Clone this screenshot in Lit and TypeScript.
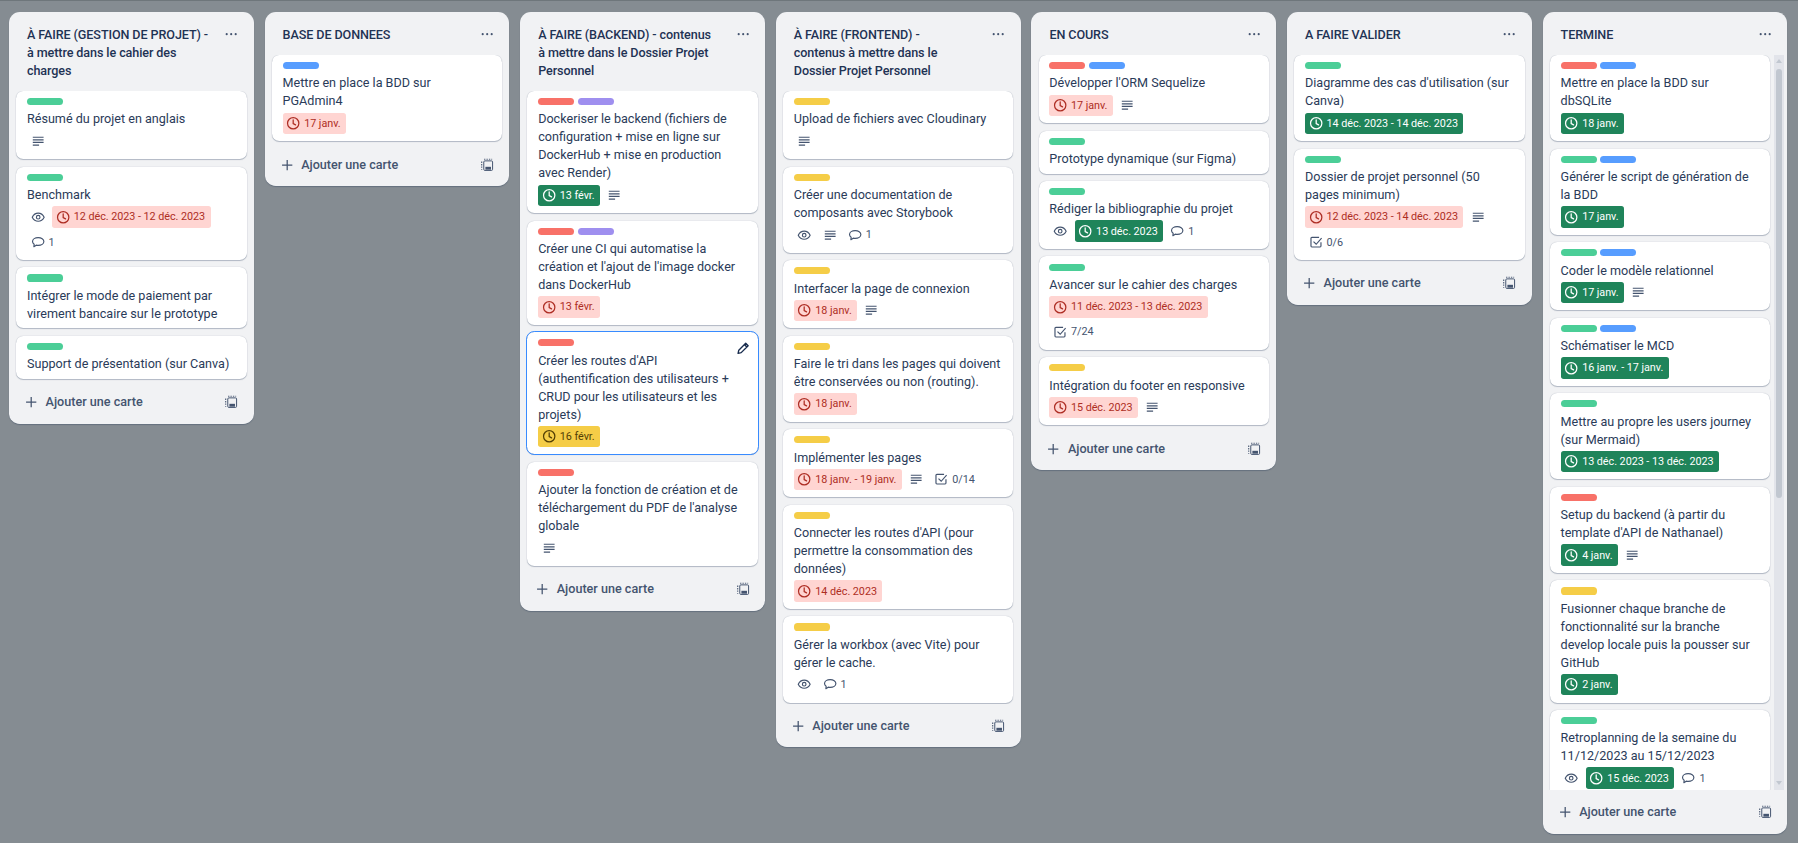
// app.ts - Trello style board, 90% browser zoom so sizes are 0.9x the usual ones
import { html, svg, css, LitElement, nothing } from 'lit';
import { customElement } from 'lit/decorators.js';

type DateKind = 'late' | 'done' | 'soon';

interface Card {
  labels: string[];
  title: string;
  watch?: boolean;
  date?: [string, DateKind];
  desc?: boolean;
  comments?: number;
  check?: string;
  hover?: boolean;
}

interface Column {
  title: string;
  cards: Card[];
  scroll?: boolean;
}

const G = 'green', R = 'red', B = 'blue', P = 'purple', Y = 'yellow';

const COLUMNS: Column[] = [
  {
    title: 'À FAIRE (GESTION DE PROJET) - à mettre dans le cahier des charges',
    cards: [
      { labels: [G], title: 'Résumé du projet en anglais', desc: true },
      { labels: [G], title: 'Benchmark', watch: true, date: ['12 déc. 2023 - 12 déc. 2023', 'late'], comments: 1 },
      { labels: [G], title: 'Intégrer le mode de paiement par virement bancaire sur le prototype' },
      { labels: [G], title: 'Support de présentation (sur Canva)' },
    ],
  },
  {
    title: 'BASE DE DONNEES',
    cards: [{ labels: [B], title: 'Mettre en place la BDD sur PGAdmin4', date: ['17 janv.', 'late'] }],
  },
  {
    title: 'À FAIRE (BACKEND) - contenus\nà mettre dans le Dossier Projet Personnel',
    cards: [
      { labels: [R, P], title: 'Dockeriser le backend (fichiers de configuration + mise en ligne sur DockerHub + mise en production avec Render)', date: ['13 févr.', 'done'], desc: true },
      { labels: [R, P], title: "Créer une CI qui automatise la création et l'ajout de l'image docker dans DockerHub", date: ['13 févr.', 'late'] },
      { labels: [R], title: "Créer les routes d'API (authentification des utilisateurs + CRUD pour les utilisateurs et les projets)", date: ['16 févr.', 'soon'], hover: true },
      { labels: [R], title: "Ajouter la fonction de création et de téléchargement du PDF de l'analyse globale", desc: true },
    ],
  },
  {
    title: 'À FAIRE (FRONTEND) -\ncontenus à mettre dans le Dossier Projet Personnel',
    cards: [
      { labels: [Y], title: 'Upload de fichiers avec Cloudinary', desc: true },
      { labels: [Y], title: 'Créer une documentation de composants avec Storybook', watch: true, desc: true, comments: 1 },
      { labels: [Y], title: 'Interfacer la page de connexion', date: ['18 janv.', 'late'], desc: true },
      { labels: [Y], title: 'Faire le tri dans les pages qui doivent être conservées ou non (routing).', date: ['18 janv.', 'late'] },
      { labels: [Y], title: 'Implémenter les pages', date: ['18 janv. - 19 janv.', 'late'], desc: true, check: '0/14' },
      { labels: [Y], title: "Connecter les routes d'API (pour permettre la consommation des données)", date: ['14 déc. 2023', 'late'] },
      { labels: [Y], title: 'Gérer la workbox (avec Vite) pour gérer le cache.', watch: true, comments: 1 },
    ],
  },
  {
    title: 'EN COURS',
    cards: [
      { labels: [R, B], title: "Développer l'ORM Sequelize", date: ['17 janv.', 'late'], desc: true },
      { labels: [G], title: 'Prototype dynamique (sur Figma)' },
      { labels: [G], title: 'Rédiger la bibliographie du projet', watch: true, date: ['13 déc. 2023', 'done'], comments: 1 },
      { labels: [G], title: 'Avancer sur le cahier des charges', date: ['11 déc. 2023 - 13 déc. 2023', 'late'], check: '7/24' },
      { labels: [Y], title: 'Intégration du footer en responsive', date: ['15 déc. 2023', 'late'], desc: true },
    ],
  },
  {
    title: 'A FAIRE VALIDER',
    cards: [
      { labels: [G], title: "Diagramme des cas d'utilisation (sur Canva)", date: ['14 déc. 2023 - 14 déc. 2023', 'done'] },
      { labels: [G], title: 'Dossier de projet personnel (50 pages minimum)', date: ['12 déc. 2023 - 14 déc. 2023', 'late'], desc: true, check: '0/6' },
    ],
  },
  {
    title: 'TERMINE',
    scroll: true,
    cards: [
      { labels: [R, B], title: 'Mettre en place la BDD sur dbSQLite', date: ['18 janv.', 'done'] },
      { labels: [G, B], title: 'Générer le script de génération de la BDD', date: ['17 janv.', 'done'] },
      { labels: [G, B], title: 'Coder le modèle relationnel', date: ['17 janv.', 'done'], desc: true },
      { labels: [G, B], title: 'Schématiser le MCD', date: ['16 janv. - 17 janv.', 'done'] },
      { labels: [G], title: 'Mettre au propre les users journey (sur Mermaid)', date: ['13 déc. 2023 - 13 déc. 2023', 'done'] },
      { labels: [R], title: "Setup du backend (à partir du template d'API de Nathanael)", date: ['4 janv.', 'done'], desc: true },
      { labels: [Y], title: 'Fusionner chaque branche de fonctionnalité sur la branche develop locale puis la pousser sur GitHub', date: ['2 janv.', 'done'] },
      { labels: [G], title: 'Retroplanning de la semaine du 11/12/2023 au 15/12/2023', watch: true, date: ['15 déc. 2023', 'done'], comments: 1 },
    ],
  },
];

const icon = (body: unknown) => html`<svg class="icon" viewBox="0 0 16 16">${body}</svg>`;

const clockIcon = icon(svg`<circle cx="8" cy="8" r="6.3" fill="none" stroke="currentColor" stroke-width="1.4"/><path d="M8 4.2V8.4l2.6 1.5" fill="none" stroke="currentColor" stroke-width="1.4" stroke-linecap="round"/>`);
const descIcon = icon(svg`<path d="M2 3.6h12M2 6.5h12M2 9.4h12M2 12.3h7" fill="none" stroke="currentColor" stroke-width="1.3"/>`);
const eyeIcon = icon(svg`<path d="M1.4 8C3 4.8 5.4 3.5 8 3.5S13 4.8 14.6 8C13 11.2 10.6 12.5 8 12.5S3 11.2 1.4 8Z" fill="none" stroke="currentColor" stroke-width="1.3"/><circle cx="8" cy="8" r="2" fill="none" stroke="currentColor" stroke-width="1.3"/>`);
const commentIcon = icon(svg`<path d="M8 3c3.5 0 6.3 1.8 6.3 4.3S11.5 11.6 8 11.6c-.8 0-1.5-.1-2.2-.3L3.2 13l.3-2.6C2.300 9.600 1.700 8.500 1.700 7.300 1.700 4.800 4.500 3 8 3Z" fill="none" stroke="currentColor" stroke-width="1.3" stroke-linejoin="round"/>`);
const checkIcon = icon(svg`<path d="M13.3 8v4.300a1 1 0 0 1-1 1H3.200a1 1 0 0 1-1-1V3.700a1 1 0 0 1 1-1h8" fill="none" stroke="currentColor" stroke-width="1.3"/><path d="M5 7.300l3 3 6-6.800" fill="none" stroke="currentColor" stroke-width="1.3"/>`);
const plusIcon = icon(svg`<path d="M8 2.300v11.400M2.300 8h11.400" fill="none" stroke="currentColor" stroke-width="1.4"/>`);
const dotsIcon = icon(svg`<circle cx="3" cy="8" r="1.200" fill="currentColor"/><circle cx="8" cy="8" r="1.200" fill="currentColor"/><circle cx="13" cy="8" r="1.200" fill="currentColor"/>`);
const templateIcon = icon(svg`<rect x="4.200" y="3.200" width="9.800" height="10.600" rx="1.200" fill="none" stroke="currentColor" stroke-width="1.100"/><rect x="6" y="9.800" width="6.200" height="3.200" fill="currentColor"/><path d="M1.900 4v9" fill="none" stroke="currentColor" stroke-width="1.200" stroke-dasharray="1.500 1.200"/><path d="M4.500 1.400h9" fill="none" stroke="currentColor" stroke-width="1" stroke-dasharray="1.500 1.200"/>`);
const pencilIcon = icon(svg`<path d="M10.800 2.500l2.700 2.700-7.700 7.700-3.500.8.800-3.500Z M9.300 4l2.700 2.700" fill="none" stroke="currentColor" stroke-width="1.500" stroke-linejoin="round"/>`);

@customElement('app-root')
export class AppRoot extends LitElement {
  renderCard(card: Card) {
    const hasBadges = card.watch || card.date || card.desc || card.comments || card.check;
    return html`
      <div class="card ${card.hover ? 'selected' : ''}">
        <div class="labels">${card.labels.map((l) => html`<span class="label ${l}"></span>`)}</div>
        <div class="card-title">${card.title}</div>
        ${hasBadges ? html`
          <div class="badges">
            ${card.watch ? html`<span class="badge">${eyeIcon}</span>` : nothing}
            ${card.date ? html`<span class="badge date ${card.date[1]}">${clockIcon}<span>${card.date[0]}</span></span>` : nothing}
            ${card.desc ? html`<span class="badge">${descIcon}</span>` : nothing}
            ${card.comments ? html`<span class="badge">${commentIcon}<span>${card.comments}</span></span>` : nothing}
            ${card.check ? html`<span class="badge">${checkIcon}<span>${card.check}</span></span>` : nothing}
          </div>
        ` : nothing}
        ${card.hover ? html`<span class="edit">${pencilIcon}</span>` : nothing}
      </div>
    `;
  }

  renderColumn(col: Column) {
    return html`
      <section class="column">
        <header class="col-head">
          <h2>${col.title}</h2>
          <span class="dots">${dotsIcon}</span>
        </header>
        <div class="list ${col.scroll ? 'scroll' : ''}">
          <div class="cards">${col.cards.map((c) => this.renderCard(c))}</div>
          ${col.scroll ? html`
            <div class="scrollbar">
              <span class="arrow up"></span>
              <span class="thumb"></span>
              <span class="rest"></span>
              <span class="arrow down"></span>
            </div>
          ` : nothing}
        </div>
        <footer class="col-foot">
          <span class="add">${plusIcon}<span>Ajouter une carte</span></span>
          <span class="tpl">${templateIcon}</span>
        </footer>
      </section>
    `;
  }

  render() {
    return html`<main class="board">${COLUMNS.map((c) => this.renderColumn(c))}</main>`;
  }

  static styles = css`
    :host {
      display: block;
      height: 843px;
      overflow: hidden;
      font-family: Roboto, 'Noto Sans', 'Liberation Sans', sans-serif;
      font-size: 12.6px;
      line-height: 18px;
      color: #2a3b59;
    }

    .board {
      height: 843px;
      box-sizing: border-box;
      display: flex;
      align-items: flex-start;
      gap: 10.8px;
      padding: 11px 9px 0;
      background: #858c92;
      border-top: 1px solid #6e767b;
    }

    .icon {
      display: block;
      width: 14.4px;
      height: 14.4px;
      flex: none;
    }

    .column {
      flex: none;
      width: 244.8px;
      max-height: 821.7px;
      display: flex;
      flex-direction: column;
      background: #f1f2f4;
      border-radius: 10.8px;
      box-shadow: 0 1px 1px #091e4240;
    }

    .col-head {
      display: flex;
      align-items: flex-start;
      padding: 13.6px 15px 11.4px 18px;
    }
    .col-head h2 {
      flex: 1;
      margin: 0;
      padding-right: 12px;
      font-size: 12.6px;
      line-height: 18px;
      font-weight: 500;
      letter-spacing: -0.1px;
      white-space: pre-line;
      color: #1f3354;
    }
    .dots {
      color: #44546f;
      margin-top: 1px;
    }

    .list {
      flex: 1;
      min-height: 0;
      overflow: hidden;
      display: flex;
      padding: 0 7.2px 1.8px;
    }
    .list.scroll {
      padding-bottom: 0;
      margin-bottom: 1px;
    }
    .cards {
      flex: 1;
      min-width: 0;
      display: flex;
      flex-direction: column;
      gap: 7.2px;
    }
    .scroll .cards {
      padding-bottom: 2px;
    }

    .scrollbar {
      flex: none;
      width: 10px;
      margin-left: 4px;
      margin-right: -3.6px;
      margin-top: -1px;
      display: flex;
      flex-direction: column;
      align-items: center;
      background: #e2e4ea;
    }
    .arrow {
      flex: none;
      width: 0;
      height: 0;
      border-left: 3.5px solid transparent;
      border-right: 3.5px solid transparent;
    }
    .arrow.up {
      margin: 5px 0 6px;
      border-bottom: 4px solid #c1c7d0;
    }
    .arrow.down {
      margin: 6px 0 5px;
      border-top: 4px solid #c1c7d0;
    }
    .thumb {
      flex: none;
      width: 6px;
      height: 429px;
      border-radius: 3px;
      background: #c1c7d0;
    }
    .rest {
      flex: 1;
    }

    .card {
      flex: none;
      position: relative;
      padding: 7.2px 10.8px 3.6px;
      background: #fff;
      border-radius: 7.2px;
      box-shadow: 0 1px 1px #091e4240, 0 0 1px #091e424f;
    }
    .card.selected {
      outline: 1.3px solid #388bff;
      outline-offset: -0.6px;
    }

    .labels {
      display: flex;
      gap: 3.6px;
      margin-bottom: 3.6px;
    }
    .label {
      width: 36px;
      height: 7.2px;
      border-radius: 3.6px;
    }
    .green { background: #4bce97; }
    .red { background: #f87168; }
    .blue { background: #579dff; }
    .purple { background: #9f8fef; }
    .yellow { background: #f5cd47; }

    .card-title {
      padding-top: 1.5px;
      margin-bottom: 2.1px;
    }

    .badges {
      display: flex;
      flex-wrap: wrap;
    }
    .badge {
      display: inline-flex;
      align-items: center;
      height: 21.6px;
      padding: 0 3.6px;
      margin: 0 3.6px 3.6px 0;
      gap: 3.6px;
      font-size: 10.8px;
      color: #44546f;
      border-radius: 2.7px;
    }
    .badge span {
      padding-top: 1px;
    }
    .date span {
      padding-right: 1.8px;
      letter-spacing: -0.04px;
    }
    .date.late {
      background: #ffd5d2;
      color: #ae2e24;
    }
    .date.done {
      background: #1f845a;
      color: #fff;
    }
    .date.soon {
      background: #f5cd47;
      color: #533f04;
    }

    .edit {
      position: absolute;
      top: 9px;
      right: 7px;
      color: #172b4d;
    }

    .col-foot {
      display: flex;
      align-items: center;
      justify-content: space-between;
      height: 28.8px;
      padding: 7.2px 15px;
      color: #44546f;
    }
    .add {
      display: flex;
      align-items: center;
      gap: 7.2px;
    }
    .add span {
      font-weight: 500;
    }
  `;
}
